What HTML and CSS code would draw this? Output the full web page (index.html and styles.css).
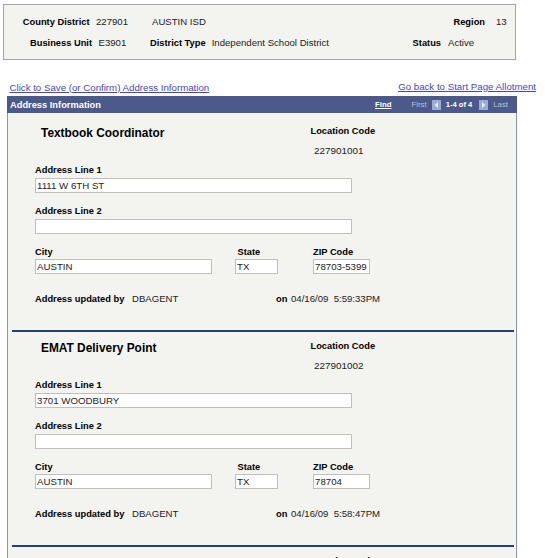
FILE: index.html
```html
<!DOCTYPE html>
<html>
<head>
<meta charset="utf-8">
<title>Address Information</title>
<link rel="stylesheet" href="styles.css">
</head>
<body>
<div class="topbox">
  <div class="trow">
    <span class="lab w-cd">County District</span>
    <span class="val w-cdv">227901</span>
    <span class="val grow">AUSTIN ISD</span>
    <span class="lab">Region</span>
    <span class="val w-reg">13</span>
  </div>
  <div class="trow r2">
    <span class="lab w-bu">Business Unit</span>
    <span class="val w-buv">E3901</span>
    <span class="lab">District Type</span>
    <span class="val grow w-dt">Independent School District</span>
    <span class="lab">Status</span>
    <span class="val w-st">Active</span>
  </div>
</div>

<div class="links">
  <a class="lnk lnk-left" href="#">Click to Save (or Confirm) Address Information</a>
  <a class="lnk lnk-right" href="#">Go back to Start Page Allotment</a>
</div>

<div class="panel">
  <div class="bar">
    <span class="bar-title">Address Information</span>
    <span class="nav">
      <a class="find" href="#">Find</a>
      <span class="dis">First</span>
      <svg class="navico" width="9" height="10" viewBox="0 0 9 10"><rect x="0" y="0" width="9" height="10" fill="#9badd6"/><polygon points="6,2 6,8 2.5,5" fill="#e3e9f6"/></svg>
      <span class="count">1-4 of 4</span>
      <svg class="navico ico-r" width="9" height="10" viewBox="0 0 9 10"><rect x="0" y="0" width="9" height="10" fill="#9badd6"/><polygon points="3,2 3,8 6.5,5" fill="#e3e9f6"/></svg>
      <span class="dis last">Last</span>
    </span>
  </div>

  <div class="sec first">
    <div class="head">
      <div class="title">Textbook Coordinator</div>
      <div class="loc">
        <div class="lab">Location Code</div>
        <div class="val locval">227901001</div>
      </div>
    </div>
    <div class="field f1">
      <div class="lab">Address Line 1</div>
      <input class="inp w-line" type="text" value="1111 W 6TH ST" readonly>
    </div>
    <div class="field f2">
      <div class="lab">Address Line 2</div>
      <input class="inp w-line" type="text" value="" readonly>
    </div>
    <div class="cityrow">
      <div class="cblk w-city">
        <div class="lab">City</div>
        <input class="inp full" type="text" value="AUSTIN" readonly>
      </div>
      <div class="cblk w-state">
        <div class="lab pad-st">State</div>
        <input class="inp full" type="text" value="TX" readonly>
      </div>
      <div class="cblk w-zip">
        <div class="lab">ZIP Code</div>
        <input class="inp full" type="text" value="78703-5399" readonly>
      </div>
    </div>
    <div class="upd">
      <span class="lab u-lab">Address updated by</span>
      <span class="val u-val">DBAGENT</span>
      <span class="lab u-on">on</span>
      <span class="val">04/16/09&nbsp; 5:59:33PM</span>
    </div>
  </div>

  <div class="sec">
    <div class="head">
      <div class="title">EMAT Delivery Point</div>
      <div class="loc">
        <div class="lab">Location Code</div>
        <div class="val locval">227901002</div>
      </div>
    </div>
    <div class="field f1">
      <div class="lab">Address Line 1</div>
      <input class="inp w-line" type="text" value="3701 WOODBURY" readonly>
    </div>
    <div class="field f2">
      <div class="lab">Address Line 2</div>
      <input class="inp w-line" type="text" value="" readonly>
    </div>
    <div class="cityrow">
      <div class="cblk w-city">
        <div class="lab">City</div>
        <input class="inp full" type="text" value="AUSTIN" readonly>
      </div>
      <div class="cblk w-state">
        <div class="lab pad-st">State</div>
        <input class="inp full" type="text" value="TX" readonly>
      </div>
      <div class="cblk w-zip">
        <div class="lab">ZIP Code</div>
        <input class="inp full" type="text" value="78704" readonly>
      </div>
    </div>
    <div class="upd">
      <span class="lab u-lab">Address updated by</span>
      <span class="val u-val">DBAGENT</span>
      <span class="lab u-on">on</span>
      <span class="val">04/16/09&nbsp; 5:58:47PM</span>
    </div>
  </div>

  <div class="sec">
    <div class="head">
      <div class="title"></div>
      <div class="loc">
        <div class="lab">Location Code</div>
      </div>
    </div>
  </div>
</div>
</body>
</html>
```

FILE: styles.css
```css
html, body {
  margin: 0;
  padding: 0;
  overflow: hidden;
  background: #ffffff;
}
body {
  font-family: "Liberation Sans", Arial, sans-serif;
  font-size: 9.3px;
  line-height: 12px;
  color: #000;
}
.lab {
  font-weight: bold;
  color: #000;
  white-space: nowrap;
}
.val {
  font-size: 9.6px;
  color: #222;
  white-space: nowrap;
}

/* top summary box */
.topbox {
  margin: 4px 0 0 3px;
  width: 513px;
  box-sizing: border-box;
  border: 1px solid #a2a2ae;
  background: #f3f3ef;
  padding: 11px 0 10px 0;
}
.trow {
  display: flex;
  height: 12px;
}
.trow.r2 { margin-top: 9px; }
.grow { flex: 1; }
.w-cd { width: 85.5px; text-align: right; }
.w-cdv { margin-left: 6.5px; width: 56px; }
.w-reg { margin-left: 11px; width: 19px; }
.w-bu { width: 88px; text-align: right; }
.w-buv { margin-left: 6.5px; width: 51.5px; }
.w-dt { margin-left: 6px; }
.w-st { margin-left: 7px; width: 67px; }

/* links */
.links {
  display: flex;
  justify-content: space-between;
  align-items: flex-end;
  height: 36px;
  padding: 0 9px 2.5px 9.5px;
  box-sizing: border-box;
}
.lnk {
  font-size: 9.7px;
  color: #4646c4;
  text-decoration: underline;
  white-space: nowrap;
}
.lnk-right { margin-bottom: 1px; }

/* panel */
.panel {
  margin-left: 7px;
  width: 510px;
  box-sizing: border-box;
  background: #f3f3ef;
  border-left: 1px solid #8d90c4;
  border-right: 1px solid #8d90c4;
}
.bar {
  height: 17px;
  margin: 0 -1px;
  background: #4c598b;
  display: flex;
  align-items: center;
  padding: 0 9px 0 3px;
  color: #fff;
}
.bar-title { font-weight: bold; }
.nav {
  margin-left: auto;
  display: flex;
  align-items: center;
  font-size: 7.8px;
}
.find {
  color: #fff;
  font-weight: bold;
  text-decoration: underline;
  margin-right: 20px;
}
.dis { color: #b9c1da; }
.navico { margin: 1px 5px 0 5px; display: block; }
.ico-r { margin-left: 7px; }
.count { font-weight: bold; color: #fff; font-size: 7.6px; }

/* sections */
.sec {
  margin: 0 2px 0 4px;
  padding: 8px 0 25px 23px;
  border-top: 2px solid #24407a;
}
.sec.first {
  border-top: none;
  padding-top: 12px;
}
.head {
  display: flex;
}
.title {
  width: 275.5px;
  box-sizing: border-box;
  padding-left: 6px;
  margin-top: 1px;
  font-size: 11.9px;
  line-height: 14px;
  font-weight: bold;
  color: #000;
}
.locval {
  margin-top: 8px;
  padding-left: 3.5px;
  font-size: 9.9px;
}
.field.f1 { margin-top: 7px; }
.field.f2 { margin-top: 12px; }
.field .lab { margin-bottom: 2px; }
.inp {
  display: block;
  height: 15px;
  box-sizing: border-box;
  border: 1px solid #bfbfbf;
  background: #fff;
  padding: 0 0 0 1px;
  margin: 0;
  font-family: "Liberation Sans", Arial, sans-serif;
  font-size: 9.7px;
  color: #222;
  outline: none;
}
.w-line { width: 317px; }
.full { width: 100%; }
.cityrow {
  display: flex;
  margin-top: 12px;
}
.cblk .lab { margin-bottom: 1px; }
.w-city { width: 177px; }
.w-state { width: 43px; margin-left: 23px; }
.w-zip { width: 57px; margin-left: 35px; }
.pad-st { padding-left: 2.5px; }
.upd {
  display: flex;
  margin-top: 19px;
}
.u-lab { width: 97px; }
.u-val { width: 144px; }
.u-on { width: 15px; }
```
